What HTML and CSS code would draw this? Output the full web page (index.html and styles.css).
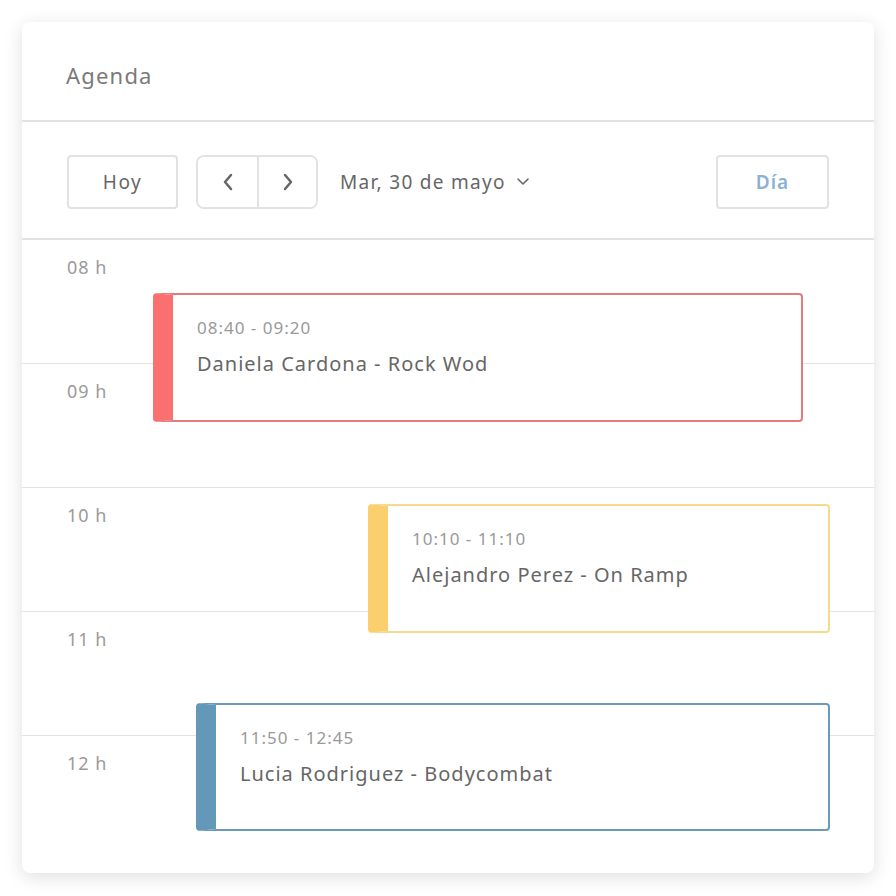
FILE: index.html
```html
<!DOCTYPE html>
<html lang="es">
<head>
    <meta charset="UTF-8">
    <meta name="viewport" content="width=device-width, initial-scale=1.0">
    <title>Agenda</title>
    <link rel="stylesheet" href="styles.css">
</head>
<body>
<div class="agenda-card">
    <!-- 헤더 -->
    <div class="agenda-header">Agenda</div>

    <!-- 툴바 -->
    <div class="agenda-toolbar">
        <button class="tool-btn today-btn">Hoy</button>
        <div class="nav-group">
            <button class="nav-btn" aria-label="Anterior">
                <svg width="12" height="18" viewBox="0 0 12 18"><path d="M9 2 L3 9 L9 16" fill="none" stroke="#666" stroke-width="2.5" stroke-linecap="round" stroke-linejoin="round"/></svg>
            </button>
            <button class="nav-btn" aria-label="Siguiente">
                <svg width="12" height="18" viewBox="0 0 12 18"><path d="M3 2 L9 9 L3 16" fill="none" stroke="#666" stroke-width="2.5" stroke-linecap="round" stroke-linejoin="round"/></svg>
            </button>
        </div>
        <div class="date-picker">
            <span>Mar, 30 de mayo</span>
            <svg width="14" height="9" viewBox="0 0 14 9"><path d="M2 2 L7 7 L12 2" fill="none" stroke="#666" stroke-width="1.6" stroke-linecap="round" stroke-linejoin="round"/></svg>
        </div>
        <button class="tool-btn view-btn">Día</button>
    </div>

    <!-- 시간 그리드 -->
    <div class="agenda-grid">
        <div class="hour-row"><span class="hour-label">08 h</span></div>
        <div class="hour-row"><span class="hour-label">09 h</span></div>
        <div class="hour-row"><span class="hour-label">10 h</span></div>
        <div class="hour-row"><span class="hour-label">11 h</span></div>
        <div class="hour-row last"><span class="hour-label">12 h</span></div>

        <div class="event event-red">
            <div class="event-time">08:40 - 09:20</div>
            <div class="event-title">Daniela Cardona - Rock Wod</div>
        </div>
        <div class="event event-yellow">
            <div class="event-time">10:10 - 11:10</div>
            <div class="event-title">Alejandro Perez - On Ramp</div>
        </div>
        <div class="event event-blue">
            <div class="event-time">11:50 - 12:45</div>
            <div class="event-title">Lucia Rodriguez - Bodycombat</div>
        </div>
    </div>
</div>
</body>
</html>
```

FILE: styles.css
```css
* {
    margin: 0;
    padding: 0;
    box-sizing: border-box;
}

body {
    font-family: "Noto Sans", "Open Sans", sans-serif;
    background: #ffffff;
    padding: 22px;
    color: #666;
}

.agenda-card {
    width: 852px;
    height: 851px;
    background: #fff;
    border-radius: 8px;
    box-shadow: 0 4px 18px rgba(0, 0, 0, 0.13);
    overflow: hidden;
}

/* 헤더 */
.agenda-header {
    height: 100px;
    padding: 39px 44px 0;
    font-size: 22px;
    letter-spacing: 1.2px;
    color: #7a7a7a;
    border-bottom: 2px solid #e2e2e2;
    line-height: 28px;
}

/* 툴바 */
.agenda-toolbar {
    height: 118px;
    display: flex;
    align-items: center;
    padding: 3px 45px 0;
    border-bottom: 2px solid #e2e2e2;
}

.tool-btn {
    font-family: inherit;
    background: #fff;
    border: 2px solid #e2e2e2;
    border-radius: 4px;
    height: 54px;
    cursor: pointer;
}

.today-btn {
    width: 111px;
    font-size: 19px;
    letter-spacing: 1.5px;
    color: #666;
}

.nav-group {
    display: flex;
    margin-left: 18px;
    height: 54px;
    border: 2px solid #e2e2e2;
    border-radius: 8px;
    overflow: hidden;
}

.nav-btn {
    width: 59px;
    background: #fff;
    border: none;
    display: flex;
    align-items: center;
    justify-content: center;
    cursor: pointer;
}

.nav-btn + .nav-btn {
    border-left: 2px solid #e2e2e2;
}

.date-picker {
    margin-left: 22px;
    display: flex;
    align-items: center;
    gap: 10px;
    font-size: 19px;
    letter-spacing: 1.3px;
    color: #666;
}

.view-btn {
    margin-left: auto;
    width: 113px;
    font-size: 19px;
    font-weight: 600;
    letter-spacing: 1px;
    color: #8cb0d6;
}

/* 시간 그리드 */
.agenda-grid {
    position: relative;
}

.hour-row {
    height: 124px;
    border-bottom: 1.5px solid #e2e2e2;
    padding: 15px 45px 0;
}

.hour-row.last {
    border-bottom: none;
}

.hour-label {
    font-size: 18px;
    letter-spacing: 1px;
    color: #9a9a9a;
}

/* 이벤트 */
.event {
    position: absolute;
    height: 129px;
    background: #fff;
    border: 2px solid;
    border-left-width: 20px;
    border-radius: 4px;
    padding: 19px 0 0 24px;
}

.event-time {
    font-size: 17px;
    letter-spacing: 1px;
    color: #999;
    line-height: 28px;
}

.event-title {
    font-size: 20px;
    letter-spacing: 1px;
    color: #666;
    margin-top: 8px;
    line-height: 28px;
}

.event-red {
    top: 53px;
    left: 131px;
    width: 650px;
    border-color: #e27c7c;
    border-left-color: #fa6f70;
}

.event-yellow {
    top: 264px;
    left: 346px;
    width: 462px;
    border-color: #f5d98c;
    border-left-color: #fbce6e;
}

.event-blue {
    top: 463px;
    left: 174px;
    width: 634px;
    height: 128px;
    border-color: #6d9ab8;
    border-left-color: #6398b8;
}
```
